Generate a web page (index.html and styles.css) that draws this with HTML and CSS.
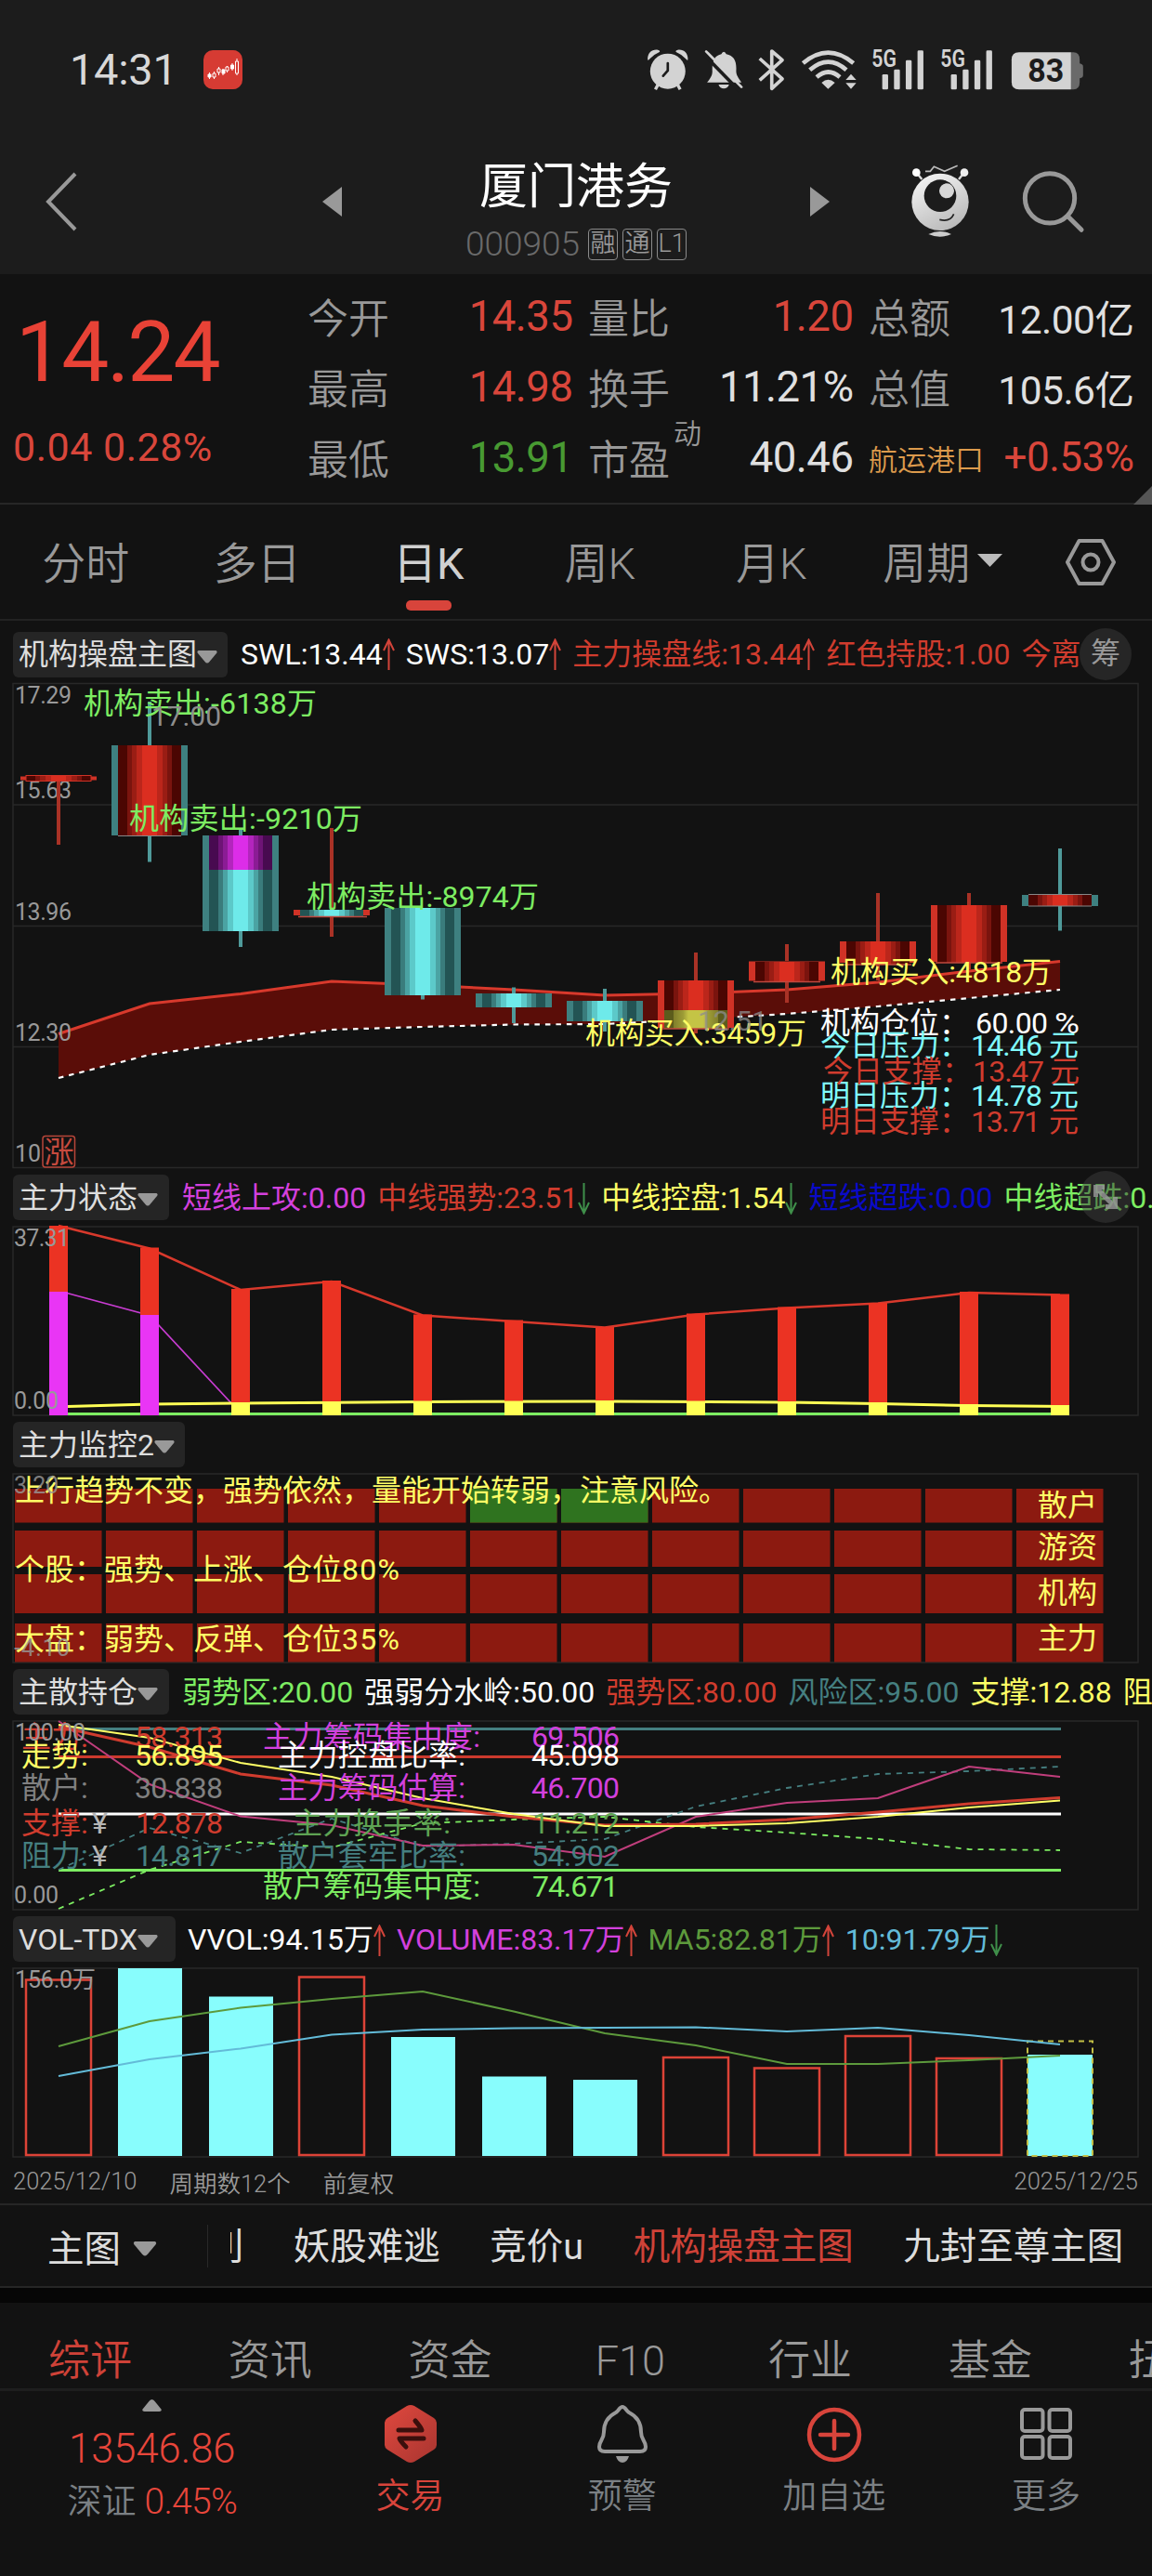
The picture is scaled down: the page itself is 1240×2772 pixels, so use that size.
FILE: index.html
```html
<!DOCTYPE html>
<html lang="zh-CN">
<head>
<meta charset="utf-8">
<title>厦门港务 000905</title>
<link rel="stylesheet" href="styles.css">
</head>
<body>
<div class="app">

<header class="top">
  <div class="status">
    <span class="clock">14:31</span>
    <svg class="app-badge" width="42" height="42" viewBox="0 0 42 42"><rect width="42" height="42" rx="10" fill="#d63b33"/><g stroke="#fff" stroke-width="1" fill="#fff"><path d="M6.500 24v7M11.500 23v8M16.500 18v9M21 20v7M25.500 17v7M31 14v8M36 9v18"/><path d="M5 26h3v3H5zM20 21h3v4h-3zM29.500 16h3v4h-3z"/><path d="M10 25h3v4h-3zM15 20h3v4h-3zM24 18h3v4h-3zM34.500 12h3v13h-3z" fill="#d63b33"/></g></svg>
    <svg class="status-icons" width="483.300" height="53.300" viewBox="30 20 1450 160" fill="#d3d3d3">
      <circle cx="116" cy="106" r="57"/><path d="M85 148l-9 17M147 148l9 17" stroke="#d3d3d3" stroke-width="10"/>
      <path d="M51 69C50 46 66 34 84 37q9 2 5 7Q70 52 58 66q-5 6-7 3zM181 69c1-23-15-35-33-32q-9 2-5 7 19 8 31 22 5 6 7 3z"/>
      <path d="M116 80v24l-15 17" fill="none" stroke="#1c1c1c" stroke-width="8" stroke-linecap="round"/>
      <path d="M243 142q17-19 17-34c-2-35 8-53 29-57q3-8 8-8t8 8c25 5 34 22 32 54 0 14 7 22 17 37zM280 149h34q-5 13-17 13t-17-13z"/>
      <path d="M232 51l116 119" stroke="#1c1c1c" stroke-width="11"/><path d="M240 42l114 115" stroke="#d3d3d3" stroke-width="8" stroke-linecap="round"/>
      <path d="M413 65l73 66-34 31V41l34 29-73 65" fill="none" stroke="#d3d3d3" stroke-width="11" stroke-linejoin="round"/>
      <g fill="none" stroke="#d3d3d3" stroke-width="14"><path d="M553 80q81-68 163 0M575 102q60-52 118 0M597 125q38-33 75 0"/></g>
      <path d="M613 143q21-20 43 0l-22 20zM708 115l17 19h-34zM691 144h34l-17 19z"/>
      <g id="signal"><text x="775" y="91" class="gen" textLength="80" lengthAdjust="spacingAndGlyphs">5G</text><rect x="809" y="116" width="19" height="49" rx="4"/><rect x="847" y="100" width="19" height="65" rx="4"/><rect x="885" y="70" width="19" height="95" rx="4"/><rect x="923" y="39" width="19" height="126" rx="4"/></g>
      <use href="#signal" x="222"/>
      <path d="M1419 45h8q20 0 20 24v12q11 2 11 10v28q0 8-11 10v12q0 24-20 24h-8z" fill="#6a6a6a"/><path d="M1419 45v120h-168q-24 0-24-24V69q0-24 24-24z"/>
      <text x="1279" y="141" class="battery" textLength="117" lengthAdjust="spacingAndGlyphs">83</text>
    </svg>
  </div>
  <div class="title-bar">
    <svg class="back" width="40" height="70" viewBox="0 0 40 70"><path d="M34 5L5 35l29 30" fill="none" stroke="#999" stroke-width="4"/></svg>
    <svg class="prev" width="21" height="32" viewBox="0 0 21 32"><path d="M21 0v32L0 16z" fill="#999"/></svg>
    <div class="title">
      <h1>厦门港务</h1>
      <p><span class="code">000905</span><b>融</b><b>通</b><b>L1</b></p>
    </div>
    <svg class="next" width="21" height="32" viewBox="0 0 21 32"><path d="M0 0v32l21-16z" fill="#999"/></svg>
    <svg class="robot" width="70" height="86.700" viewBox="895 400 210 260">
      <defs><linearGradient id="shell" x1="0.200" y1="0" x2="0.700" y2="1"><stop stop-color="#f5f5f5"/><stop offset="1" stop-color="#b8b8b8"/></linearGradient></defs>
      <path d="M925 440l16 20M1076 440l-16 20" stroke="#ddd" stroke-width="7"/><circle cx="923" cy="438" r="13" fill="#fff"/><circle cx="1078" cy="438" r="13" fill="#eee"/>
      <path d="M952 434h16l12-15 34 15 42-18" stroke="#bbb" stroke-width="5" fill="none"/>
      <circle cx="1000" cy="533" r="92" fill="url(#shell)"/><circle cx="1000" cy="513" r="52" fill="#1c1c1c"/><circle cx="1021" cy="497" r="24" fill="#d8d8d8"/>
      <path d="M998 590q34 9 46-18" stroke="#222" stroke-width="5" fill="none"/><path d="M962 637q38-18 74 0-37 16-74 0z" fill="#ccc"/>
    </svg>
    <svg class="search" width="71.700" height="71.700" viewBox="1255 420 215 215" fill="none" stroke="#999" stroke-width="15"><circle cx="1354" cy="520" r="80"/><path d="M1412 578l44 44" stroke-linecap="round"/></svg>
  </div>
</header>

<section class="quote">
  <div class="last"><strong>14.24</strong><span>0.04 0.28%</span></div>
  <dl>
    <div><dt>今开</dt><dd class="up">14.35</dd></div>
    <div><dt>量比</dt><dd class="up">1.20</dd></div>
    <div><dt>总额</dt><dd class="sm">12.00亿</dd></div>
    <div><dt>最高</dt><dd class="up">14.98</dd></div>
    <div><dt>换手</dt><dd>11.21%</dd></div>
    <div><dt>总值</dt><dd class="sm">105.6亿</dd></div>
    <div><dt>最低</dt><dd class="down">13.91</dd></div>
    <div><dt>市盈<sup>动</sup></dt><dd>40.46</dd></div>
    <div><dt class="sector">航运港口</dt><dd class="up change">+0.53%</dd></div>
  </dl>
  <i class="corner"></i>
</section>

<nav class="periods">
  <a>分时</a><a>多日</a><a class="on">日K</a><a>周K</a><a>月K</a>
  <a>周期<svg width="27" height="14" viewBox="0 0 27 14"><path d="M0 0h27L13.500 14z" fill="#bbb"/></svg></a>
  <svg class="gear" width="54" height="50" viewBox="0 0 54 50" fill="none" stroke="#999" stroke-width="4"><path d="M14.500 2h25L52 25 39.500 48h-25L2 25z" stroke-linejoin="round"/><circle cx="27" cy="25" r="8.500"/></svg>
</nav>

<svg class="defs" width="0" height="0">
  <defs>
    <linearGradient id="r"><stop offset=".14" stop-color="#4b0602"/><stop offset=".14" stop-color="#7a140e"/><stop offset=".22" stop-color="#7a140e"/><stop offset=".22" stop-color="#9a1d14"/><stop offset=".3" stop-color="#9a1d14"/><stop offset=".3" stop-color="#bb261b"/><stop offset=".382" stop-color="#bb261b"/><stop offset=".382" stop-color="#db2e20"/><stop offset=".618" stop-color="#db2e20"/><stop offset=".618" stop-color="#bb261b"/><stop offset=".7" stop-color="#bb261b"/><stop offset=".7" stop-color="#9a1d14"/><stop offset=".78" stop-color="#9a1d14"/><stop offset=".78" stop-color="#7a140e"/><stop offset=".86" stop-color="#7a140e"/><stop offset=".86" stop-color="#4b0602"/></linearGradient>
    <linearGradient id="c"><stop offset=".14" stop-color="#235454"/><stop offset=".14" stop-color="#3a7c7c"/><stop offset=".22" stop-color="#3a7c7c"/><stop offset=".22" stop-color="#4ba3a3"/><stop offset=".3" stop-color="#4ba3a3"/><stop offset=".3" stop-color="#5cc9c9"/><stop offset=".382" stop-color="#5cc9c9"/><stop offset=".382" stop-color="#6eeaea"/><stop offset=".618" stop-color="#6eeaea"/><stop offset=".618" stop-color="#5cc9c9"/><stop offset=".7" stop-color="#5cc9c9"/><stop offset=".7" stop-color="#4ba3a3"/><stop offset=".78" stop-color="#4ba3a3"/><stop offset=".78" stop-color="#3a7c7c"/><stop offset=".86" stop-color="#3a7c7c"/><stop offset=".86" stop-color="#235454"/></linearGradient>
    <linearGradient id="m"><stop offset=".14" stop-color="#480a50"/><stop offset=".14" stop-color="#6e1476"/><stop offset=".22" stop-color="#6e1476"/><stop offset=".22" stop-color="#8b1c95"/><stop offset=".3" stop-color="#8b1c95"/><stop offset=".3" stop-color="#b325bd"/><stop offset=".382" stop-color="#b325bd"/><stop offset=".382" stop-color="#dc2de8"/><stop offset=".618" stop-color="#dc2de8"/><stop offset=".618" stop-color="#b325bd"/><stop offset=".7" stop-color="#b325bd"/><stop offset=".7" stop-color="#8b1c95"/><stop offset=".78" stop-color="#8b1c95"/><stop offset=".78" stop-color="#6e1476"/><stop offset=".86" stop-color="#6e1476"/><stop offset=".86" stop-color="#480a50"/></linearGradient>
    <linearGradient id="y"><stop offset=".14" stop-color="#5c5c1c"/><stop offset=".14" stop-color="#7f7d2a"/><stop offset=".3" stop-color="#9d9c36"/><stop offset=".382" stop-color="#c4c445"/><stop offset=".618" stop-color="#c4c445"/><stop offset=".7" stop-color="#9d9c36"/><stop offset=".86" stop-color="#7f7d2a"/><stop offset=".86" stop-color="#5c5c1c"/></linearGradient>
    <symbol id="arrow-up" viewBox="0 0 13 34"><path d="M6.500 34V2M1 13L6.500 1.500 12 13" fill="none" stroke="#d2443a" stroke-width="2"/></symbol>
    <symbol id="arrow-down" viewBox="0 0 13 34"><path d="M6.500 0v32M1 21l5.500 11.500L12 21" fill="none" stroke="#3f8f4a" stroke-width="2"/></symbol>
    <symbol id="caret" viewBox="0 0 22 14"><path d="M1.500 0h19q2 1 .5 3l-7.500 9q-2.500 3-5 0L1 3Q-.5 1 1.500 0z" fill="#999"/></symbol>
  </defs>
</svg>

<div class="legend first">
  <button class="pill p1">机构操盘主图<svg><use href="#caret"/></svg></button>
  <span class="white">SWL:13.44<svg><use href="#arrow-up"/></svg></span>
  <span class="white">SWS:13.07<svg><use href="#arrow-up"/></svg></span>
  <span class="red">主力操盘线:13.44<svg><use href="#arrow-up"/></svg></span>
  <span class="red">红色持股:1.00</span>
  <span class="red">今离</span>
  <i class="round">筹</i>
</div>
<svg class="panel" width="1240" height="522" viewBox="0 735 1240 522">
  <g class="frame"><rect x="14" y="735.500" width="1211" height="521"/><path d="M14 866h1211M14 996.500h1211M14 1126.500h1211"/></g>
  <path d="M63 1112.500L161 1080 259 1069.500 357 1056 455 1060 553 1065 651 1071 749 1069 847 1065 945 1057 1043 1045 1141 1034.500V1065L1043 1074 945 1083 847 1091 749 1097 651 1102 553 1102.500 455 1105 357 1108 259 1121 161 1135 63 1160z" fill="#5a0d08"/>
  <path d="M63 1112.500L161 1080 259 1069.500 357 1056 455 1060 553 1065 651 1071 749 1069 847 1065 945 1057 1043 1045 1141 1034.500" fill="none" stroke="#d8392c" stroke-width="3"/>
  <path d="M63 1160L161 1135 259 1121 357 1108 455 1105 553 1102.500 651 1102 749 1097 847 1091 945 1083 1043 1074 1141 1065" fill="none" stroke="#fff" stroke-width="2.200" stroke-dasharray="5.500 6"/>
  <g class="axis"><text x="16" y="757" textLength="61">17.29</text><text x="16" y="858.500" textLength="61">15.63</text><text x="16" y="989.500" textLength="61">13.96</text><text x="16" y="1120" textLength="61">12.30</text><text x="16" y="1250">10.</text></g>
  <g stroke="#a93226" stroke-width="4"><path d="M63 841v68M357 891v88M357 986v22M749 1025v30M749 1107v5M847 1016v18M847 1056v23M945 961v52M945 1038v17M1043 961v13M1043 1036v7"/></g>
  <g stroke="#4f9a9a" stroke-width="4"><path d="M161 755v47M161 899v28.500M259 893v6M259 1002v17M455 1071v4.500M553 1062.500v7M553 1084v17M651 1064v13M651 1099v11M1141 913v50M1141 975v26.500"/></g>
  <path d="M22 835.500h82v4H22zM316 979h82v6h-82zM708 1055h82v51h-82zM806 1034.500h82v21h-82zM904 1013h82v23h-82zM1002 974h82v61h-82z" fill="#d03226"/>
  <path d="M120 802h82v97h-82zM218 899h82v103h-82zM414 977h82v94h-82zM512 1069h82v15h-82zM610 1077h82v22h-82zM1100 963h82v12h-82z" fill="#3e8080"/>
  <g fill="url(#r)"><rect x="28" y="834.500" width="70" height="6" stroke="#d03226" stroke-width="1"/><rect x="127" y="802" width="68" height="97"/><rect x="715" y="1055" width="68" height="52"/><rect x="813" y="1035" width="68" height="21"/><rect x="911" y="1013" width="68" height="25"/><rect x="1009" y="974" width="68" height="62"/><rect x="1107" y="963" width="68" height="12"/></g>
  <g fill="url(#c)"><rect x="225" y="899" width="68" height="103"/><rect x="323" y="979" width="68" height="7"/><rect x="421" y="977" width="68" height="94"/><rect x="519" y="1069" width="68" height="15"/><rect x="617" y="1077" width="68" height="22"/></g>
  <rect x="225" y="899" width="68" height="37" fill="url(#m)"/><rect x="715" y="1087" width="68" height="20" fill="url(#y)"/>
  <g stroke="#c0483e" stroke-width="1.500"><path d="M321 986.500h74M713 1107h72M811 1056.500h72M909 1038h72M1007 1036h72"/></g>
  <g stroke="#888" stroke-width="1"><path d="M127 899.500h68M1107 962.500h68M1107 975h68"/></g>
  <g class="note green"><text x="90" y="768" textLength="251">机构卖出:-6138万</text><text x="139" y="891.500" textLength="251">机构卖出:-9210万</text><text x="330" y="975.500" textLength="250">机构卖出:-8974万</text></g>
  <g class="note yellow"><text x="630" y="1123" textLength="238">机构买入:3459万</text><text x="894" y="1057" textLength="238">机构买入:4818万</text></g>
  <g class="mark"><text x="163" y="780.500" textLength="75">17.00</text><text x="751" y="1109" textLength="75" opacity=".75">12.51</text></g>
  <g class="note white"><text x="883" y="1112">机构仓位：</text><text x="1050" y="1112" textLength="78">60.00</text><text x="1135" y="1112" textLength="27" lengthAdjust="spacingAndGlyphs">%</text></g>
  <g class="note cyan"><text x="883" y="1136">今日压力：</text><text x="1045" y="1136" textLength="77">14.46</text><text x="1129" y="1136">元</text><text x="883" y="1190">明日压力：</text><text x="1045" y="1190" textLength="77">14.78</text><text x="1129" y="1190">元</text></g>
  <g class="note red"><text x="886" y="1164">今日支撑：</text><text x="1047" y="1164" textLength="77">13.47</text><text x="1130" y="1164">元</text><text x="883" y="1218">明日支撑：</text><text x="1045" y="1218" textLength="75">13.71</text><text x="1129" y="1218">元</text></g>
  <rect x="46" y="1222.500" width="34.500" height="33.500" rx="3" fill="#121212" stroke="#b8463a" stroke-width="1.500"/><text x="47.500" y="1251" class="rise">涨</text>
</svg>

<div class="legend">
  <button class="pill p2">主力状态<svg><use href="#caret"/></svg></button>
  <span class="magenta">短线上攻:0.00</span>
  <span class="red">中线强势:23.51<svg><use href="#arrow-down"/></svg></span>
  <span class="yellow">中线控盘:1.54<svg><use href="#arrow-down"/></svg></span>
  <span class="blue">短线超跌:0.00</span>
  <span class="green">中线超跌:0.00</span>
  <i class="round ghost"><svg width="28" height="28" viewBox="0 0 28 28" fill="#999"><path d="M1 1h12v5H9.500L22 19v-5h5v13H14v-5h4L6 10v4H1z"/></svg></i>
</div>
<svg class="panel" width="1240" height="203" viewBox="0 1320 1240 203">
  <g class="frame"><rect x="14" y="1320" width="1211" height="203"/></g>
  <path d="M73 1521.500H1151" stroke="#7ded62" stroke-width="3"/>
  <path d="M63 1319L161 1343.500 259 1388 357 1379 455 1415.500 553 1422 651 1428.500 749 1414.500 847 1407.500 945 1402.500 1043 1391 1141 1393.500" fill="none" stroke="#d8392c" stroke-width="2.500"/>
  <path d="M63 1389L161 1415.500 249 1510" fill="none" stroke="#c73cd0" stroke-width="1.800"/>
  <path d="M73 1513.500L161 1511 259 1510 455 1508.500 651 1508 847 1509 945 1510.500 1043 1512.500 1151 1513.500" fill="none" stroke="#ffff55" stroke-width="3"/>
  <path d="M53 1319h20v204H53zM151 1342.500h20V1523h-20zM249 1387h20v136h-20zM347 1378h20v145h-20zM445 1414.500h20V1523h-20zM543 1420.500h20V1523h-20zM641 1428h20v95h-20zM739 1413.500h20V1523h-20zM837 1406.500h20V1523h-20zM935 1402h20v121h-20zM1033 1390h20v133h-20zM1131 1392.500h20V1523h-20z" fill="#eb3323"/>
  <path d="M53 1390h20v133H53zM151 1415h20v108h-20z" fill="#e935f5"/>
  <path d="M249 1509h20v14h-20zM347 1508h20v15h-20zM445 1507.500h20v15.500h-20zM543 1507.500h20v15.500h-20zM641 1507h20v16h-20zM739 1507.500h20v15.500h-20zM837 1508h20v15h-20zM935 1509h20v14h-20zM1033 1511h20v12h-20zM1131 1512h20v11h-20z" fill="#ffff55"/>
  <g class="axis"><text x="15" y="1341" textLength="60">37.31</text><text x="15" y="1516" textLength="48">0.00</text></g>
</svg>

<div class="legend"><button class="pill p3">主力监控2<svg><use href="#caret"/></svg></button></div>
<svg class="panel" width="1240" height="203" viewBox="0 1586 1240 203">
  <defs><pattern id="cells" x="16" y="0" width="98" height="3000" patternUnits="userSpaceOnUse"><rect width="93.500" height="3000" fill="#8c1a10"/></pattern></defs>
  <g class="frame"><rect x="14" y="1586" width="1211" height="203"/></g>
  <g fill="url(#cells)"><rect x="16" y="1602" width="1172" height="36.500"/><rect x="16" y="1647" width="1172" height="39"/><rect x="16" y="1694" width="1172" height="42"/><rect x="16" y="1747" width="1172" height="41.500"/></g>
  <path d="M506 1602h93.500v36.500H506zM604 1602h93.500v36.500H604z" fill="#2f731f"/>
  <g class="note yellow"><text x="16" y="1615">上行趋势不变，强势依然，量能开始转弱，注意风险。</text><text x="16" y="1700">个股：强势、上涨、仓位<tspan textLength="62">80%</tspan></text><text x="16" y="1775">大盘：弱势、反弹、仓位<tspan textLength="62">35%</tspan></text>
  <text x="1117" y="1631">散户</text><text x="1117" y="1676">游资</text><text x="1117" y="1724.500">机构</text><text x="1117" y="1774">主力</text></g>
  <g class="axis" opacity=".8"><text x="15" y="1607" textLength="48">3.20</text><text x="15" y="1782" textLength="60">-4.10</text></g>
</svg>

<div class="legend">
  <button class="pill p2">主散持仓<svg><use href="#caret"/></svg></button>
  <span class="green">弱势区:20.00</span>
  <span class="white">强弱分水岭:50.00</span>
  <span class="red">强势区:80.00</span>
  <span class="teal">风险区:95.00</span>
  <span class="yellow">支撑:12.88</span>
  <span class="yellow">阻力:14.82</span>
</div>
<svg class="panel" width="1240" height="203" viewBox="0 1852 1240 203">
  <g class="frame"><rect x="14" y="1852" width="1211" height="203"/></g>
  <g fill="none">
    <g stroke-width="3"><path d="M63 1860.500H1142" stroke="#457f80"/><path d="M63 1890.500H1142" stroke="#cb3a2d"/><path d="M63 1952H1142" stroke="#fff"/><path d="M63 2012.500H1142" stroke="#7ded62"/></g>
    <path d="M63 2012L161 1967 259 1994 357 1957 455 1987 553 1984 651 1979 749 1944 847 1924 945 1909 1043 1906 1141 1901" stroke="#457f80" stroke-width="1.800" stroke-dasharray="6 6"/>
    <path d="M63 2054L161 2012 259 1982 357 1988 455 1962 553 1958 651 1955 749 1966 847 1972 945 1979 1043 1990 1141 1991" stroke="#7ded62" stroke-width="1.800" stroke-dasharray="6 6"/>
    <path d="M63 1852L161 1920 259 1954.500 357 1964 455 1986 553 1985 651 1998 749 1955 847 1940 945 1935 1043 1901 1141 1912" stroke="#c03e7c" stroke-width="2"/>
    <path d="M63 1858L161 1880 259 1909 357 1921 455 1943 553 1955 651 1964 749 1963 847 1958 945 1950 1043 1941 1141 1934.500" stroke="#d03c2e" stroke-width="3"/>
    <path d="M63 1856L161 1870 259 1897 357 1912 455 1935 553 1952 651 1965 749 1965 847 1962 945 1955 1043 1945 1141 1937.500" stroke="#ffff66" stroke-width="2"/>
  </g>
  <g class="note">
    <g class="red"><text x="23" y="1880">主力:</text><text x="145" y="1880" textLength="95">58.313</text><text x="23" y="1973">支撑:</text><text x="146" y="1973" textLength="94">12.878</text></g>
    <g class="yellow"><text x="23" y="1899.500">走势:</text><text x="145" y="1899.500" textLength="95">56.895</text></g>
    <g class="gray"><text x="23" y="1934.500">散户:</text><text x="145" y="1934.500" textLength="95">30.838</text></g>
    <g class="teal"><text x="23" y="2008">阻力:</text><text x="146" y="2008" textLength="94">14.817</text><text x="299" y="2008" textLength="202">散户套牢比率:</text><text x="572" y="2008" textLength="95">54.902</text></g>
    <g class="silver"><text x="99" y="1973">¥</text><text x="99" y="2008">¥</text></g>
    <g class="magenta"><text x="283" y="1880" textLength="234">主力筹码集中度:</text><text x="572" y="1880" textLength="95">69.506</text><text x="299" y="1934.500" textLength="202">主力筹码估算:</text><text x="572" y="1934.500" textLength="95">46.700</text></g>
    <g class="leaf"><text x="315" y="1973" textLength="170">主力换手率:</text><text x="573" y="1973" textLength="94">11.212</text></g>
    <g class="white"><text x="299" y="1899.500" textLength="202">主力控盘比率:</text><text x="572" y="1899.500" textLength="95">45.098</text></g>
    <g class="green"><text x="283" y="2041" textLength="234">散户筹码集中度:</text><text x="573" y="2041" textLength="93">74.671</text></g>
  </g>
  <g class="axis"><text x="16" y="1872.500" textLength="76">100.00</text><text x="15" y="2047.500" textLength="48">0.00</text></g>
</svg>

<div class="legend">
  <button class="pill p5">VOL-TDX<svg><use href="#caret"/></svg></button>
  <span class="white">VVOL:94.15万<svg><use href="#arrow-up"/></svg></span>
  <span class="magenta">VOLUME:83.17万<svg><use href="#arrow-up"/></svg></span>
  <span class="olive">MA5:82.81万<svg><use href="#arrow-up"/></svg></span>
  <span class="sky">10:91.79万<svg><use href="#arrow-down"/></svg></span>
</div>
<svg class="panel" width="1240" height="203" viewBox="0 2118 1240 203">
  <g class="frame"><rect x="14" y="2118" width="1211" height="203"/></g>
  <path d="M127 2118h69v202h-69zM225 2148.500h69V2320h-69zM421 2192h69v128h-69zM519 2234.500h69v85.500h-69zM617 2238h69v82h-69zM1106 2211h70v109h-70z" fill="#88fdfd"/>
  <path d="M28 2130.500h70V2319H28zM322 2127.500h70V2319h-70zM714 2214h70v105h-70zM812 2225.500h70V2319h-70zM910 2191h70v128h-70zM1008 2215h70v104h-70z" fill="none" stroke="#dd4337" stroke-width="2.500"/>
  <rect x="1106" y="2196.500" width="70" height="123.500" fill="none" stroke="#c3bf45" stroke-width="2" stroke-dasharray="6 5"/>
  <path d="M63 2202L161 2175 259 2160.500 357 2151 455 2143 553 2164.500 651 2188 749 2201 847 2221 945 2221 1043 2217 1141 2212" fill="none" stroke="#5d9a3c" stroke-width="2"/>
  <path d="M63 2234L161 2216 259 2204.500 357 2189.500 455 2184 553 2182.500 651 2182 749 2181.500 847 2186 945 2182 1043 2190 1141 2200" fill="none" stroke="#63bbd8" stroke-width="2"/>
  <g class="axis"><text x="16" y="2139" textLength="87">156.0万</text></g>
</svg>

<div class="dates"><span>2025/12/10</span><span>周期数12个</span><span>前复权</span><span>2025/12/25</span></div>

<nav class="strategies">
  <button>主图<svg width="26" height="16"><use href="#caret"/></svg></button>
  <div><a class="cut">利</a><a>妖股难逃</a><a>竞价u</a><a class="on">机构操盘主图</a><a>九封至尊主图</a></div>
</nav>
<div class="gap"></div>
<nav class="sections"><a class="on">综评</a><a>资讯</a><a>资金</a><a>F10</a><a>行业</a><a>基金</a><a>扭亏</a></nav>

<footer class="dock">
  <div class="index"><svg width="21" height="13" viewBox="0 0 21 13"><path d="M10.500 0q2 0 3.500 2.500l6.500 8q1 2.500-2 2.500h-16q-3 0-2-2.500l6.500-8Q8.500 0 10.500 0z" fill="#999"/></svg><b>13546.86</b><p>深证 <em>0.45%</em></p></div>
  <a class="on"><svg width="56" height="64" viewBox="0 0 56 64"><defs><linearGradient id="hex" x1="0" y1="0" x2="1" y2="1"><stop stop-color="#e0483e"/><stop offset="1" stop-color="#a83530"/></linearGradient></defs><path d="M24 2q4-2 8 0l21 13q3 2 3 5v24q0 3-3 5L32 62q-4 2-8 0L3 49q-3-2-3-5V20q0-3 3-5z" fill="url(#hex)"/><path d="M15 28h25q-1-3-7-10M42 37H16q1 3 7 9" fill="none" stroke="#3a0f0c" stroke-width="5" stroke-linecap="round" stroke-linejoin="round"/></svg>交易</a>
  <a><svg width="56" height="64" viewBox="0 0 56 64" fill="none" stroke="#999" stroke-width="4"><path d="M28 3c-3 0-4 4-7 6C11 14 8 21 8 30c0 9-5 9-5 16q0 5 6 5h38q6 0 6-5c0-7-5-7-5-16 0-9-3-16-13-21-3-2-4-6-7-6z"/><path d="M21 56h14q-2 7-7 7t-7-7z" fill="#999" stroke="none"/></svg>预警</a>
  <a><svg width="60" height="64" viewBox="0 0 60 64" fill="none" stroke="#d8443b" stroke-width="4.500"><circle cx="30" cy="33" r="27"/><path d="M30 18v30M15 33h30" stroke-linecap="round"/></svg>加自选</a>
  <a><svg width="56" height="64" viewBox="0 0 56 64" fill="none" stroke="#999" stroke-width="4"><rect x="2" y="6" width="22.500" height="23" rx="3"/><rect x="31.500" y="6" width="22.500" height="23" rx="3"/><rect x="2" y="35" width="22.500" height="23" rx="3"/><rect x="31.500" y="35" width="22.500" height="23" rx="3"/></svg>更多</a>
</footer>
</div>
</body>
</html>
```
FILE: styles.css
```css
* { box-sizing: border-box; margin: 0; padding: 0; }
body { background: #121212; color: #e0e0e0; font-family: Roboto, "Noto Sans CJK SC", sans-serif; }
.app { width: 1240px; height: 2772px; overflow: hidden; background: #121212; }
svg { flex: none; }
a, button { color: inherit; font: inherit; background: none; border: 0; }
i, em { font-style: normal; }
.defs { position: absolute; }

/* header */
.top { height: 295px; background: #1c1c1c; }
.status { display: flex; align-items: center; height: 149px; padding: 0 67px 0 75px; }
.clock { width: 144px; font-size: 47px; letter-spacing: -.3px; color: #d8d8d8; }
.status-icons { margin-left: auto; }
.gen { font: 600 78px Roboto, sans-serif; }
.battery { font: 700 108px Roboto, sans-serif; fill: #1c1c1c; }
.title-bar { display: flex; align-items: flex-start; height: 146px; padding-left: 47px; }
.back { margin-top: 33px; }
.prev { margin: 52px 0 0 260px; }
.next { margin: 52px 0 0; }
.title { width: 504px; text-align: center; padding-top: 19px; }
.title h1 { font-size: 52px; line-height: 68px; font-weight: 400; color: #fff; }
.title p { display: flex; justify-content: center; align-items: center; gap: 5px; height: 38px; margin-top: 8px; }
.code { margin-right: 4px; font-size: 37px; line-height: 38px; color: #6a6a6a; font-weight: 350; }
.title b { width: 32px; height: 34px; border: 1.500px solid #8a8a8a; border-radius: 4px; color: #999; font-weight: 350; font-size: 27px; line-height: 30px; }
.robot { margin: 24px 0 0 84px; }
.search { margin: 31px 0 0 50px; }

/* quote summary */
.quote { position: relative; display: flex; height: 248px; padding-right: 20px; border-bottom: 2px solid #272727; }
.last { width: 331px; padding: 31px 0 0 14px; color: #e84236; }
.last strong { display: block; padding-left: 3px; font-size: 91px; line-height: 107px; font-weight: 400; letter-spacing: -2px; }
.last span { display: block; margin-top: 23px; font-size: 43px; line-height: 50px; letter-spacing: .5px; color: #d9463b; white-space: nowrap; }
.quote dl { display: grid; grid-template-columns: repeat(3, 285px); gap: 0 17px; padding-top: 7px; grid-auto-rows: 76px; }
.quote dl div { display: flex; justify-content: space-between; align-items: center; white-space: nowrap; }
.quote dt { position: relative; font-size: 44px; color: #999; font-weight: 350; }
.quote dt sup { position: absolute; left: 92px; top: -8px; font-size: 30px; line-height: 30px; }
.quote dt.sector { font-size: 31px; color: #dc9a4c; }
.quote dd { font-size: 45.500px; letter-spacing: -.5px; margin-right: -.5px; color: #e0e0e0; }
.quote dd.sm { font-size: 42.500px; }
.quote dd.change { font-size: 44px; }
.quote dd.up { color: #d9463b; }
.quote dd.down { color: #489a32; }
.corner { position: absolute; right: 0; bottom: -2px; border-style: solid; border-width: 0 0 20px 20px; border-color: transparent transparent #555; }

/* period tabs */
.periods { display: flex; align-items: center; height: 125px; border-bottom: 2px solid #222; font-size: 47px; font-weight: 350; color: #999; }
.periods a { position: relative; display: flex; justify-content: center; align-items: center; gap: 8px; width: 184.500px; height: 100%; padding-bottom: 4px; }
.periods .on { color: #d0d0d0; font-weight: 400; }
.periods .on::after { content: ""; position: absolute; bottom: 9px; left: 68px; width: 49px; height: 11px; border-radius: 5px; background: #d8443b; }
.gear { margin-left: 40px; }

/* indicator legends */
.legend { position: relative; display: flex; align-items: center; gap: 12px; height: 63px; padding-left: 14px; overflow: hidden; white-space: nowrap; font-size: 32px; line-height: 49px; }
.legend.first { height: 67px; padding-top: 5px; }
.legend span { display: flex; align-items: center; padding-top: 2px; }
.legend.first span { padding-top: 0; }
.legend span svg { width: 13px; height: 34px; }
.pill { display: flex; align-items: center; height: 49px; padding: 1px 0 0 6px; margin-right: 2px; border-radius: 6px; background: #252525; color: #ddd; flex: none; }
.pill svg { width: 22px; height: 14px; margin-top: 4px; }
.p1 { width: 231px; } .p2 { width: 168px; } .p3 { width: 185px; } .p5 { width: 175px; margin-right: 1px; }
.round { position: absolute; left: 1162px; top: 8px; width: 56px; height: 56px; border-radius: 50%; background: #262626; color: #999; text-align: center; line-height: 54px; }
.ghost { top: 3px; background: rgba(60, 60, 60, .5); display: flex; align-items: center; justify-content: center; }
.ghost svg { opacity: .8; }
.white { color: #fff; fill: #fff; }
.red { color: #d03c2e; fill: #d03c2e; }
.magenta { color: #d340dd; fill: #d340dd; }
.yellow { color: #ffff66; fill: #ffff66; }
.green { color: #7ded62; fill: #7ded62; }
.blue { color: #0a0ac8; }
.teal { color: #457f80; fill: #457f80; }
.cyan { fill: #80fbfd; }
.gray { fill: #808080; }
.silver { fill: #b5b5b5; }
.leaf { fill: #5ea353; }
.olive { color: #5d9a3c; }
.sky { color: #63bbd8; }

/* chart panels */
.panel { display: block; overflow: visible; }
.frame { fill: none; stroke: #282828; stroke-width: 1.500; }
.axis { font-size: 25px; fill: #999; }
.note { font-size: 32px; }
.mark { font-size: 30px; fill: #8e8e8e; }
.rise { font-size: 32px; fill: #c64a3e; }
.dates { display: flex; align-items: center; height: 50px; padding: 2px 15px 0 14px; font-size: 25.500px; font-weight: 350; color: #999; }
.dates span { margin-right: 35px; }
.dates span:last-child { margin: 0 0 0 auto; }

/* strategy bar */
.strategies { display: flex; align-items: center; height: 91px; border: solid #262626; border-width: 2px 0; font-size: 39.500px; color: #ddd; }
.strategies button { display: flex; align-items: center; gap: 13px; width: 224px; height: 46px; padding-left: 51px; border-right: 1px solid #292929; }
.strategies button svg { margin-top: 7px; }
.strategies div { display: flex; gap: 53.500px; width: 993px; margin-left: 24px; padding-top: 2px; overflow: hidden; white-space: nowrap; line-height: 60px; }
.strategies .cut { margin-left: -25px; }
.strategies .on { color: #cf4238; }
.gap { height: 16px; background: #060606; }
.sections { display: flex; height: 95px; padding-top: 29px; overflow: hidden; border-bottom: 3px solid #1e1e1e; font-size: 45px; font-weight: 350; line-height: 68px; color: #999; }
.sections a { flex: none; width: 193.800px; text-align: center; }
.sections .on { color: #cf4238; }

/* dock */
.dock { display: flex; height: 199px; font-size: 37px; font-weight: 350; color: #7b8084; }
.dock a { display: flex; flex-direction: column; align-items: center; width: 228.500px; padding-top: 14px; line-height: 60px; }
.dock a svg { margin-bottom: 6px; }
.dock .on { color: #d8443b; }
.index { display: flex; flex-direction: column; align-items: center; width: 328px; padding: 9px 0 0; }
.index b { margin-top: 15px; font-size: 43.500px; line-height: 52px; font-weight: 350; letter-spacing: 0; color: #e8463b; }
.index p { margin-top: 3px; line-height: 54px; }
.index em { font-size: 39px; letter-spacing: -.7px; color: #e8463b; }
```
